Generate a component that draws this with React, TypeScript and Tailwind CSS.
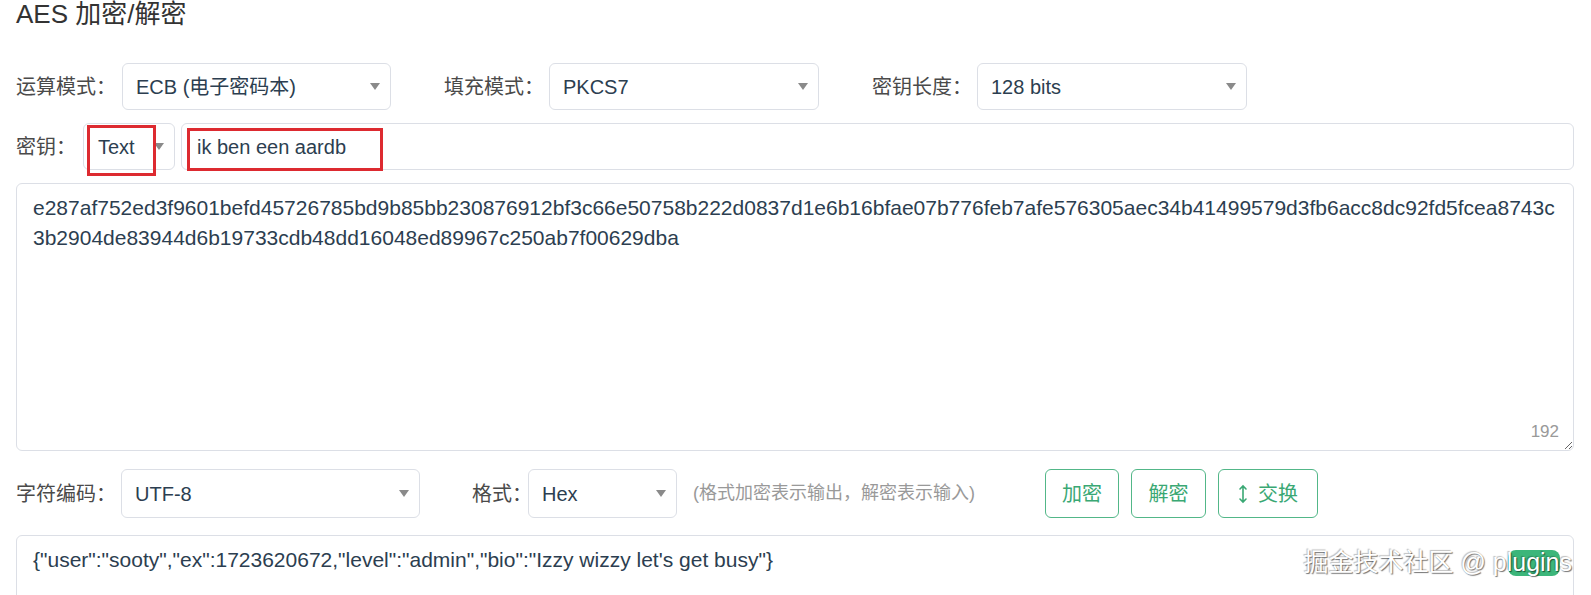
import { ReactNode } from "react";

const FONT = "font-['Liberation_Sans','Noto_Sans_CJK_SC',sans-serif]";

const CIPHER =
  "e287af752ed3f9601befd45726785bd9b85bb230876912bf3c66e50758b222d0837d1e6b16bfae07b776feb7afe576305aec34b41499579d3fb6acc8dc92fd5fcea8743c3b2904de83944d6b19733cdb48dd16048ed89967c250ab7f00629dba";

const PLAIN = '{"user":"sooty","ex":1723620672,"level":"admin","bio":"Izzy wizzy let\'s get busy"}';

const Caret = () => (
  <span className="h-0 w-0 border-x-[5px] border-t-[7px] border-x-transparent border-t-[#8a8a8a]" />
);

type SelectProps = {
  value: string;
  width: string;
  children?: ReactNode;
};

const Select = ({ value, width, children }: SelectProps) => {
  return (
    <div
      className={`relative flex h-full shrink-0 items-center justify-between rounded-[6px] border border-[#dcdfe6] bg-white pl-[13px] pr-[10px] text-[20px] text-[#2c3e50] ${width}`}
    >
      <span>{value}</span>
      <Caret />
      {children}
    </div>
  );
};

const Label = ({ children, width }: { children: ReactNode; width: string }) => (
  <span className={`shrink-0 whitespace-nowrap text-[20px] text-[#4a4a4a] ${width}`}>{children}</span>
);

const Button = ({ children, width }: { children: ReactNode; width: string }) => (
  <button
    className={`flex h-full items-center justify-center gap-[10px] rounded-[6px] border border-[#52b788] bg-white text-[20px] text-[#3aa874] ${width}`}
  >
    {children}
  </button>
);

const SwapIcon = () => (
  <svg width="10" height="20" viewBox="0 0 10 20" fill="none" stroke="#3aa874" strokeWidth="1.6" strokeLinecap="round">
    <path d="M5 2v16M2 5l3-3 3 3M2 15l3 3 3-3" />
  </svg>
);

export default function App() {
  return (
    <div className={`relative min-h-[595px] overflow-hidden bg-white pl-[16px] pr-[17px] ${FONT}`}>
      <h1 className="text-[26px] leading-[29px] font-normal text-[#333]">AES 加密/解密</h1>

      <div className="mt-[34px] flex h-[47px] items-center">
        <Label width="w-[106px]">运算模式：</Label>
        <Select value="ECB (电子密码本)" width="w-[269px]" />
        <span className="w-[53px] shrink-0" />
        <Label width="w-[105px]">填充模式：</Label>
        <Select value="PKCS7" width="w-[270px]" />
        <span className="w-[53px] shrink-0" />
        <Label width="w-[105px]">密钥长度：</Label>
        <Select value="128 bits" width="w-[270px]" />
      </div>

      <div className="mt-[13px] flex h-[47px] items-center">
        <Label width="w-[67px]">密钥：</Label>
        <Select value="Text" width="w-[92px] !pl-[14px]">
          <span className="absolute left-[3px] top-[1px] h-[51px] w-[69px] border-[3px] border-[#dd2a30]" />
        </Select>
        <div className="relative ml-[6px] flex h-full flex-1 items-center rounded-[6px] border border-[#dcdfe6] bg-white pl-[15px] text-[20px] text-[#2c3e50]">
          ik ben een aardb
          <span className="absolute left-[5px] top-[4px] h-[43px] w-[196px] border-[3px] border-[#dd2a30]" />
        </div>
      </div>

      <div className="relative mt-[13px] h-[268px]">
        <textarea
          readOnly
          defaultValue={CIPHER}
          className="block h-full w-full resize-y rounded-[6px] border border-[#dcdfe6] bg-white px-[16px] pt-[9px] text-[21px] leading-[30px] text-[#2c3e50] outline-none [word-break:break-all]"
        />
        <span className="absolute bottom-[7px] right-[15px] text-[17px] text-[#999]">192</span>
      </div>

      <div className="mt-[18px] flex h-[49px] items-center">
        <Label width="w-[105px]">字符编码：</Label>
        <Select value="UTF-8" width="w-[299px]" />
        <span className="w-[52px] shrink-0" />
        <Label width="w-[56px]">格式：</Label>
        <Select value="Hex" width="w-[149px]" />
        <span className="ml-[16px] w-[352px] shrink-0 whitespace-nowrap text-[18px] text-[#999]">
          (格式加密表示输出，解密表示输入)
        </span>
        <div className="flex h-full gap-[12px]">
          <Button width="w-[74px]">加密</Button>
          <Button width="w-[75px]">解密</Button>
          <Button width="w-[100px]">
            <SwapIcon />
            交换
          </Button>
        </div>
      </div>

      <div className="mt-[17px] h-[120px] rounded-[6px] border border-[#dcdfe6] bg-white px-[16px] pt-[9px] text-[21px] leading-[30px] text-[#2c3e50]">
        {PLAIN}
      </div>

      <div className="absolute right-[31px] top-[550px] h-[26px] w-[52px] rounded-[8px] bg-[#3cb67a]" />
      <div className="absolute right-[19px] top-[544px] whitespace-nowrap text-[25px] text-white [text-shadow:1px_1px_1px_rgba(0,0,0,0.55),-1px_-1px_1px_rgba(0,0,0,0.25)]">
        掘金技术社区 @ plugins
      </div>
    </div>
  );
}
